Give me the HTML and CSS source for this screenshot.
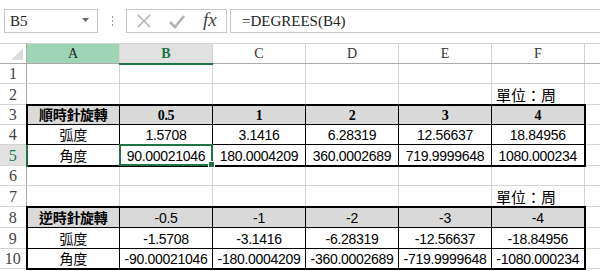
FILE: index.html
```html
<!DOCTYPE html>
<html lang="zh-Hant">
<head>
  <meta charset="UTF-8">
  <title>DEGREES</title>
  <link rel="stylesheet" href="styles.css">
</head>
<body>
  <div class="bar">
    <div class="namebox">
      <span>B5</span>
      <svg class="caret" width="7" height="4" viewBox="0 0 7 4"><path d="M0 0h7L3.5 4z" fill="#666"/></svg>
    </div>
    <div class="grip"><i></i><i></i><i></i></div>
    <div class="fnbtns">
      <svg width="16" height="16" viewBox="0 0 16 16"><path d="M2 2L14 14M14 2L2 14" stroke="#b4b4b4" stroke-width="1.6" fill="none"/></svg>
      <svg width="18" height="16" viewBox="0 0 18 16"><path d="M2 9L7 14L16 3" stroke="#b4b4b4" stroke-width="2.6" fill="none"/></svg>
      <span class="fx">fx</span>
    </div>
    <div class="formula">=DEGREES(B4)</div>
  </div>

  <table class="sheet">
    <colgroup>
      <col class="c-rh"><col class="c-col"><col class="c-col"><col class="c-col"><col class="c-col"><col class="c-col"><col class="c-col"><col class="c-last">
    </colgroup>
    <tr class="h-head">
      <th class="corner"><span class="tri"></span></th>
      <th class="ch ch-hover">A</th>
      <th class="ch ch-sel">B</th>
      <th class="ch">C</th>
      <th class="ch">D</th>
      <th class="ch">E</th>
      <th class="ch">F</th>
      <th class="ch"></th>
    </tr>
    <tr class="h20"><td class="rh">1</td><td></td><td></td><td></td><td></td><td></td><td></td><td></td></tr>
    <tr class="h21"><td class="rh">2</td><td></td><td></td><td></td><td></td><td></td><td class="left">單位：周</td><td></td></tr>
    <tr class="h20 fill">
      <td class="rh">3</td>
      <td class="t tt tl b cjk">順時針旋轉</td>
      <td class="t tt b num-b">0.5</td>
      <td class="t tt b num-b">1</td>
      <td class="t tt b num-b">2</td>
      <td class="t tt b num-b">3</td>
      <td class="t tt tr b num-b">4</td>
      <td class="plain"></td>
    </tr>
    <tr class="h20">
      <td class="rh">4</td>
      <td class="t tl cjk">弧度</td>
      <td class="t">1.5708</td>
      <td class="t">3.1416</td>
      <td class="t">6.28319</td>
      <td class="t">12.56637</td>
      <td class="t tr">18.84956</td>
      <td></td>
    </tr>
    <tr class="h21">
      <td class="rh rh-sel">5</td>
      <td class="t tb tl cjk">角度</td>
      <td class="t tb sel">90.00021046<span class="handle"></span></td>
      <td class="t tb">180.0004209</td>
      <td class="t tb">360.0002689</td>
      <td class="t tb">719.9999648</td>
      <td class="t tb tr">1080.000234</td>
      <td></td>
    </tr>
    <tr class="h20"><td class="rh">6</td><td></td><td></td><td></td><td></td><td></td><td></td><td></td></tr>
    <tr class="h21"><td class="rh">7</td><td></td><td></td><td></td><td></td><td></td><td class="left">單位：周</td><td></td></tr>
    <tr class="h21 fill">
      <td class="rh">8</td>
      <td class="t tt tl b cjk">逆時針旋轉</td>
      <td class="t tt">-0.5</td>
      <td class="t tt">-1</td>
      <td class="t tt">-2</td>
      <td class="t tt">-3</td>
      <td class="t tt tr">-4</td>
      <td class="plain"></td>
    </tr>
    <tr class="h21">
      <td class="rh">9</td>
      <td class="t tl cjk">弧度</td>
      <td class="t">-1.5708</td>
      <td class="t">-3.1416</td>
      <td class="t">-6.28319</td>
      <td class="t">-12.56637</td>
      <td class="t tr">-18.84956</td>
      <td></td>
    </tr>
    <tr class="h20">
      <td class="rh">10</td>
      <td class="t tb tl cjk">角度</td>
      <td class="t tb">-90.00021046</td>
      <td class="t tb">-180.0004209</td>
      <td class="t tb">-360.0002689</td>
      <td class="t tb">-719.9999648</td>
      <td class="t tb tr">-1080.000234</td>
      <td></td>
    </tr>
  </table>
</body>
</html>
```

FILE: styles.css
```css
html, body {
  margin: 0;
  padding: 0;
  background: #fff;
  overflow: hidden;
  width: 600px;
  height: 271px;
}
body {
  font-family: "Liberation Sans", "Noto Sans CJK TC", sans-serif;
  color: #000;
}

/* formula bar */
.bar {
  display: flex;
  align-items: flex-start;
  height: 43px;
  padding-top: 9px;
  box-sizing: border-box;
  width: 600px;
}
.namebox {
  margin-left: 4px;
  width: 94px;
  height: 24px;
  box-sizing: border-box;
  border: 1px solid #c6c6c6;
  display: flex;
  align-items: center;
  justify-content: space-between;
  padding: 0 8px 0 5px;
  font-family: "Liberation Serif", serif;
  font-size: 15px;
  color: #222;
}
.caret { margin-top: -2px; }
.grip {
  width: 28px;
  height: 24px;
  display: flex;
  flex-direction: column;
  align-items: center;
  justify-content: center;
  gap: 2px;
}
.grip i {
  display: block;
  width: 1px;
  height: 2px;
  background: #999;
}
.fnbtns {
  width: 101px;
  height: 24px;
  box-sizing: border-box;
  border: 1px solid #c6c6c6;
  display: flex;
  align-items: center;
  padding-left: 9px;
  gap: 16px;
}
.fx {
  font-family: "Liberation Serif", serif;
  font-style: italic;
  font-size: 19px;
  color: #444;
  margin-left: 1px;
  margin-top: -3px;
}
.formula {
  margin-left: 3px;
  flex: 1;
  height: 24px;
  box-sizing: border-box;
  border: 1px solid #c6c6c6;
  border-right: none;
  padding-left: 11px;
  font-family: "Liberation Serif", serif;
  font-size: 15px;
  line-height: 22px;
  color: #222;
}

/* sheet */
.sheet {
  border-collapse: collapse;
  table-layout: fixed;
  width: 601px;
  margin-left: -1px;
}
.c-rh { width: 27px; }
.c-col { width: 93px; }
.c-last { width: 16px; }
.sheet td, .sheet th {
  border: 1px solid #d4d4d4;
  padding: 0 3px;
  white-space: nowrap;
  overflow: hidden;
  text-align: center;
  vertical-align: bottom;
  font-size: 14px;
  letter-spacing: -0.3px;
  line-height: 17px;
}
.h-head { height: 20px; }
.h20 { height: 20px; }
.h21 { height: 21px; }

.corner {
  position: relative;
  border-right-color: #ababab !important;
  border-bottom-color: #ababab !important;
}
.tri {
  position: absolute;
  right: 3px;
  bottom: 3px;
  width: 0;
  height: 0;
  border-left: 12px solid transparent;
  border-bottom: 12px solid #dcdcdc;
}
.sheet th.ch {
  font-family: "Liberation Serif", serif;
  font-weight: normal;
  font-size: 14px;
  color: #333;
  border-bottom-color: #ababab;
  vertical-align: middle;
  letter-spacing: 0;
}
.sheet th.ch-hover { background: #9fd5b7; color: #222; }
.sheet th.ch-sel {
  background: #e1e1e1;
  color: #217346;
  font-weight: bold;
  border-bottom: 2px solid #217346;
}
.sheet td.rh {
  font-family: "Liberation Serif", serif;
  font-size: 16px;
  color: #444;
  padding: 0;
  letter-spacing: 0;
  border-right-color: #ababab;
  vertical-align: middle;
}
.sheet td.rh-sel {
  background: #e1e1e1;
  color: #217346;
  border-right: 2px solid #217346;
}

.fill td { background: #d9d9d9; }
.fill td.rh, .fill td.plain { background: #fff; }

.sheet td.t { border: 1px solid #000; }
.sheet td.tt { border-top: 2px solid #000; }
.sheet td.tb { border-bottom: 2px solid #000; }
.sheet td.tl { border-left: 2px solid #000; }
.sheet td.tr { border-right: 2px solid #000; }

.cjk {
  font-size: 15px;
  letter-spacing: 0;
}
.b { font-weight: bold; }
.num-b {
  font-family: "Liberation Serif", serif;
  font-size: 17px;
  letter-spacing: 0;
}
.sheet td.left {
  text-align: left;
  font-size: 15px;
  letter-spacing: 0;
  padding-left: 4px;
}

.sel { position: relative; overflow: visible !important; }
.sel::after {
  content: "";
  position: absolute;
  left: -1px;
  top: -1px;
  right: -1px;
  bottom: -1px;
  border: 2px solid #217346;
}
.handle {
  position: absolute;
  right: -3px;
  bottom: -3px;
  width: 5px;
  height: 5px;
  background: #217346;
  border: 1px solid #fff;
  z-index: 2;
}
```
